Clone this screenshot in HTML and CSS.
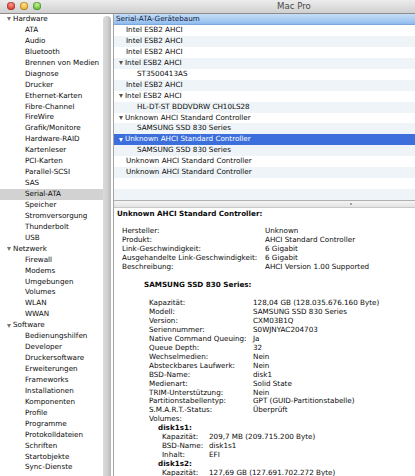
FILE: index.html
```html
<!DOCTYPE html>
<html lang="de">
<head>
    <meta charset="UTF-8">
    <title>Mac Pro</title>
    <link rel="stylesheet" href="styles.css">
</head>
<body>
<div class="window">
    <div class="titlebar">
        <span class="light red"></span>
        <span class="light yellow"></span>
        <span class="light green"></span>
        <span class="title">Mac Pro</span>
    </div>

    <div class="main">
        <nav class="sidebar">
            <div class="list">
                <div class="group"><span class="tri"></span>Hardware</div>
                <div class="item">ATA</div>
                <div class="item">Audio</div>
                <div class="item">Bluetooth</div>
                <div class="item">Brennen von Medien</div>
                <div class="item">Diagnose</div>
                <div class="item">Drucker</div>
                <div class="item">Ethernet-Karten</div>
                <div class="item">Fibre-Channel</div>
                <div class="item">FireWire</div>
                <div class="item">Grafik/Monitore</div>
                <div class="item">Hardware-RAID</div>
                <div class="item">Kartenleser</div>
                <div class="item">PCI-Karten</div>
                <div class="item">Parallel-SCSI</div>
                <div class="item">SAS</div>
                <div class="item selected">Serial-ATA</div>
                <div class="item">Speicher</div>
                <div class="item">Stromversorgung</div>
                <div class="item">Thunderbolt</div>
                <div class="item">USB</div>
                <div class="group"><span class="tri"></span>Netzwerk</div>
                <div class="item">Firewall</div>
                <div class="item">Modems</div>
                <div class="item">Umgebungen</div>
                <div class="item">Volumes</div>
                <div class="item">WLAN</div>
                <div class="item">WWAN</div>
                <div class="group"><span class="tri"></span>Software</div>
                <div class="item">Bedienungshilfen</div>
                <div class="item">Developer</div>
                <div class="item">Druckersoftware</div>
                <div class="item">Erweiterungen</div>
                <div class="item">Frameworks</div>
                <div class="item">Installationen</div>
                <div class="item">Komponenten</div>
                <div class="item">Profile</div>
                <div class="item">Programme</div>
                <div class="item">Protokolldateien</div>
                <div class="item">Schriften</div>
                <div class="item">Startobjekte</div>
                <div class="item">Sync-Dienste</div>
            </div>
            <div class="scroller"><div class="thumb"></div></div>
        </nav>

        <div class="content">
            <div class="tree">
                <div class="tree-head">Serial-ATA-Gerätebaum</div>
                <div class="row lvl1">Intel ESB2 AHCI</div>
                <div class="row lvl1">Intel ESB2 AHCI</div>
                <div class="row lvl1">Intel ESB2 AHCI</div>
                <div class="row lvl1"><span class="tri"></span>Intel ESB2 AHCI</div>
                <div class="row lvl2">ST3500413AS</div>
                <div class="row lvl1">Intel ESB2 AHCI</div>
                <div class="row lvl1"><span class="tri"></span>Intel ESB2 AHCI</div>
                <div class="row lvl2">HL-DT-ST BDDVDRW CH10LS28</div>
                <div class="row lvl1"><span class="tri"></span>Unknown AHCI Standard Controller</div>
                <div class="row lvl2">SAMSUNG SSD 830 Series</div>
                <div class="row lvl1 active"><span class="tri"></span>Unknown AHCI Standard Controller</div>
                <div class="row lvl2">SAMSUNG SSD 830 Series</div>
                <div class="row lvl1">Unknown AHCI Standard Controller</div>
                <div class="row lvl1">Unknown AHCI Standard Controller</div>
                <div class="row"></div>
                <div class="row"></div>
            </div>

            <div class="splitter"><span class="dimple"></span></div>

            <div class="details">
                <div class="heading">Unknown AHCI Standard Controller:</div>
                <div class="gap"></div>
                <div class="kv kv-ctrl">
                    <span>Hersteller:</span><span>Unknown</span>
                    <span>Produkt:</span><span>AHCI Standard Controller</span>
                    <span>Link-Geschwindigkeit:</span><span>6 Gigabit</span>
                    <span>Ausgehandelte Link-Geschwindigkeit:</span><span>6 Gigabit</span>
                    <span>Beschreibung:</span><span>AHCI Version 1.00 Supported</span>
                </div>
                <div class="gap"></div>

                <div class="device">
                    <div class="heading">SAMSUNG SSD 830 Series:</div>
                    <div class="gap"></div>
                    <div class="kv kv-disk">
                        <span>Kapazität:</span><span>128,04 GB (128.035.676.160 Byte)</span>
                        <span>Modell:</span><span>SAMSUNG SSD 830 Series</span>
                        <span>Version:</span><span>CXM03B1Q</span>
                        <span>Seriennummer:</span><span>S0WJNYAC204703</span>
                        <span>Native Command Queuing:</span><span>Ja</span>
                        <span>Queue Depth:</span><span>32</span>
                        <span>Wechselmedien:</span><span>Nein</span>
                        <span>Absteckbares Laufwerk:</span><span>Nein</span>
                        <span>BSD-Name:</span><span>disk1</span>
                        <span>Medienart:</span><span>Solid State</span>
                        <span>TRIM-Unterstützung:</span><span>Nein</span>
                        <span>Partitionstabellentyp:</span><span>GPT (GUID-Partitionstabelle)</span>
                        <span>S.M.A.R.T.-Status:</span><span>Überprüft</span>
                    </div>
                    <div class="volumes">
                        <div>Volumes:</div>
                        <div class="volume">
                            <div class="heading">disk1s1:</div>
                            <div class="kv kv-vol">
                                <span>Kapazität:</span><span>209,7 MB (209.715.200 Byte)</span>
                                <span>BSD-Name:</span><span>disk1s1</span>
                                <span>Inhalt:</span><span>EFI</span>
                            </div>
                            <div class="heading">disk1s2:</div>
                            <div class="kv kv-vol">
                                <span>Kapazität:</span><span>127,69 GB (127.691.702.272 Byte)</span>
                            </div>
                        </div>
                    </div>
                </div>
            </div>
        </div>
    </div>
</div>
</body>
</html>
```

FILE: styles.css
```css
body {
    margin: 0;
    width: 415px;
    height: 476px;
    overflow: hidden;
    background: #ffffff;
    font-family: "DejaVu Sans", "Liberation Sans", sans-serif;
    font-size: 7.2px;
    color: #0a0a0a;
}
.window {
    width: 588px;
    height: 476px;
    display: flex;
    flex-direction: column;
}

/* Titelleiste */
.titlebar {
    height: 13px;
    flex: none;
    position: relative;
    display: flex;
    align-items: center;
    gap: 5px;
    padding-left: 7px;
    background: linear-gradient(#ececec, #d0d0d0);
    border-bottom: 1px solid #8c8c8c;
}
.light {
    width: 8px;
    height: 8px;
    border-radius: 50%;
    margin-top: -2px;
    box-shadow: inset 0 0 0 0.5px rgba(0,0,0,0.35);
}
.light.red { background: radial-gradient(circle at 50% 35%, #ff9a8c, #e0443a 60%, #a0201a); }
.light.yellow { background: radial-gradient(circle at 50% 35%, #ffe39a, #f0b431 60%, #b07a10); }
.light.green { background: radial-gradient(circle at 50% 35%, #c8f29a, #6ec43d 60%, #3a8a1a); }
.title {
    position: absolute;
    left: 0;
    right: 0;
    top: 0;
    line-height: 12px;
    text-align: center;
    font-size: 8.6px;
    color: #4a4a4a;
}

.main {
    flex: 1;
    display: flex;
    min-height: 0;
}

/* Seitenleiste */
.sidebar {
    width: 113px;
    flex: none;
    display: flex;
    border-right: 1px solid #a3a3a3;
    overflow: hidden;
}
.list {
    width: 103px;
    flex: none;
}
.group, .item {
    height: 10.95px;
    line-height: 10.95px;
    white-space: nowrap;
}
.group {
    padding-left: 7px;
    display: flex;
    align-items: center;
}
.group .tri {
    border-top-color: #777;
    margin-right: 2px;
}
.item {
    padding-left: 25px;
}
.item.selected {
    background: #d2d2d2;
}
.tri {
    display: inline-block;
    width: 0;
    height: 0;
    border-left: 2.5px solid transparent;
    border-right: 2.5px solid transparent;
    border-top: 4px solid #555;
}
.scroller {
    width: 10px;
    flex: none;
    padding-top: 2px;
}
.thumb {
    width: 8px;
    height: 480px;
    border-radius: 4px;
    background: linear-gradient(to right, #dadada, #cfcfcf 60%, #b4b4b4);
}

/* Inhalt */
.content {
    flex: 1;
    display: flex;
    flex-direction: column;
    min-width: 0;
}
.tree {
    flex: none;
    border-bottom: 1px solid #b0b0b0;
}
.tree-head {
    height: 10px;
    line-height: 10px;
    padding-left: 2px;
    background: linear-gradient(#c6def7, #a3c8f1 70%, #8dbbee);
    border-bottom: 1px solid #7ca7da;
    color: #102040;
}
.row {
    height: 10.95px;
    line-height: 10.95px;
    white-space: nowrap;
    display: flex;
    align-items: center;
}
.row:nth-child(odd) {
    background: #eef4f7;
}
.row.lvl1 { padding-left: 12px; }
.row.lvl2 { padding-left: 23px; }
.row .tri {
    margin-left: -7px;
    margin-right: 2px;
}
.row.active {
    background: #3c6fdc;
    color: #fff;
}
.row.active .tri {
    border-top-color: #fff;
}
.splitter {
    height: 6px;
    flex: none;
    display: flex;
    justify-content: center;
    align-items: center;
    background: linear-gradient(#f4f4f4, #e4e4e4);
    border-bottom: 1px solid #c8c8c8;
}
.dimple {
    width: 2px;
    height: 2px;
    border-radius: 50%;
    background: #8a8a8a;
}

.details {
    flex: 1;
    padding: 1.5px 0 0 3px;
    line-height: 8.95px;
    white-space: nowrap;
    overflow: hidden;
}
.heading {
    font-weight: bold;
}
.gap {
    height: 8.95px;
}
.kv {
    display: grid;
}
.kv-ctrl {
    grid-template-columns: 143px auto;
    margin-left: 5px;
}
.device {
    margin-left: 27px;
}
.kv-disk {
    grid-template-columns: 104px auto;
    margin-left: 5px;
}
.volumes {
    margin-left: 5px;
}
.volume {
    margin-left: 9px;
}
.kv-vol {
    grid-template-columns: 47px auto;
    margin-left: 4px;
}
```
